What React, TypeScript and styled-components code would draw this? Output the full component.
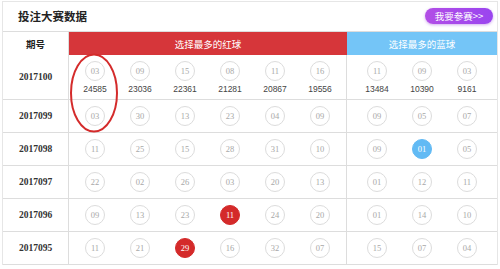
import styled, { createGlobalStyle } from "styled-components";

type Draw = {
  issue: string;
  red: string[];
  blue: string[];
  redCounts?: string[];
  blueCounts?: string[];
  hitRed?: number;
  hitBlue?: number;
};

const draws: Draw[] = [
  {
    issue: "2017100",
    red: ["03", "09", "15", "08", "11", "16"],
    blue: ["11", "09", "03"],
    redCounts: ["24585", "23036", "22361", "21281", "20867", "19556"],
    blueCounts: ["13484", "10390", "9161"],
  },
  { issue: "2017099", red: ["03", "30", "13", "23", "04", "09"], blue: ["09", "05", "07"] },
  { issue: "2017098", red: ["11", "25", "15", "28", "31", "10"], blue: ["09", "01", "05"], hitBlue: 1 },
  { issue: "2017097", red: ["22", "02", "26", "03", "20", "13"], blue: ["01", "12", "11"] },
  { issue: "2017096", red: ["09", "13", "23", "11", "24", "20"], blue: ["01", "14", "10"], hitRed: 3 },
  { issue: "2017095", red: ["11", "21", "29", "16", "32", "07"], blue: ["15", "07", "04"], hitRed: 2 },
];

const GlobalStyle = createGlobalStyle`
  body {
    margin: 0;
    background: #fff;
    font-family: "Noto Sans CJK SC", "Liberation Sans", sans-serif;
  }
`;

const App = () => {
  return (
    <Page>
      <GlobalStyle />
      <Panel>
        <TitleBar>
          <Title>投注大赛数据</Title>
          <JoinButton>我要参赛&gt;&gt;</JoinButton>
        </TitleBar>
        <HeadRow>
          <HeadLabel>期号</HeadLabel>
          <HeadBand $color="#d6363a">选择最多的红球</HeadBand>
          <HeadBand $color="#74c5f7">选择最多的蓝球</HeadBand>
        </HeadRow>
        {draws.map((d) => (
          <Row key={d.issue} $tall={!!d.redCounts}>
            <Issue>{d.issue}</Issue>
            <BallGroup $divider>
              {d.red.map((n, i) => (
                <BallCell key={i}>
                  <Ball $fill={d.hitRed === i ? "#d42a2a" : undefined}>{n}</Ball>
                  {d.redCounts && <Count>{d.redCounts[i]}</Count>}
                </BallCell>
              ))}
            </BallGroup>
            <BallGroup>
              {d.blue.map((n, i) => (
                <BallCell key={i}>
                  <Ball $fill={d.hitBlue === i ? "#62baf4" : undefined}>{n}</Ball>
                  {d.blueCounts && <Count>{d.blueCounts[i]}</Count>}
                </BallCell>
              ))}
            </BallGroup>
          </Row>
        ))}
      </Panel>
      <Circle width="50" height="82" viewBox="0 0 50 82">
        <ellipse cx="25" cy="41" rx="23" ry="38.5" fill="none" stroke="#d42b2b" strokeWidth="2" />
      </Circle>
    </Page>
  );
};

export default App;

const Page = styled.div`
  position: relative;
  width: 500px;
  height: 269px;
  overflow: hidden;
`;

const Panel = styled.div`
  box-sizing: border-box;
  width: 496px;
  margin: 1px 0 0 2px;
  border: 1px solid #e6e6e6;
  border-bottom: none;
`;

const TitleBar = styled.div`
  display: flex;
  align-items: center;
  justify-content: space-between;
  height: 29px;
  padding: 0 4px 0 15px;
  border-bottom: 1px solid #dddddd;
`;

const Title = styled.div`
  font-size: 11.5px;
  font-weight: bold;
  color: #222;
  margin-top: -1px;
`;

const JoinButton = styled.div`
  display: flex;
  align-items: center;
  justify-content: center;
  width: 68px;
  height: 16px;
  margin-top: -1px;
  border-radius: 8px;
  background: linear-gradient(90deg, #b24ee6, #9a45ef);
  box-shadow: 0 1px 3px rgba(150, 70, 220, 0.45);
  color: #fff;
  font-size: 9.5px;
`;

const HeadRow = styled.div`
  display: grid;
  grid-template-columns: 66px 278px 150px;
  height: 23px;
`;

const HeadLabel = styled.div`
  display: flex;
  align-items: center;
  justify-content: center;
  border-right: 1px solid #dddddd;
  font-size: 9.5px;
  font-weight: bold;
  color: #222;
`;

const HeadBand = styled.div<{ $color: string }>`
  display: flex;
  align-items: center;
  justify-content: center;
  background: ${({ $color }) => $color};
  color: #fff;
  font-size: 9.5px;
`;

const Row = styled.div<{ $tall: boolean }>`
  display: grid;
  grid-template-columns: 66px 278px 150px;
  height: ${({ $tall }) => ($tall ? "44px" : "32px")};
  border-bottom: 1px solid #dddddd;
`;

const Issue = styled.div`
  display: flex;
  align-items: center;
  justify-content: center;
  border-right: 1px solid #dddddd;
  font-family: "Liberation Serif", serif;
  font-size: 9.5px;
  font-weight: bold;
  color: #333;
`;

const BallGroup = styled.div<{ $divider?: boolean }>`
  display: flex;
  align-items: center;
  justify-content: center;
  border-right: ${({ $divider }) => ($divider ? "1px solid #dddddd" : "none")};
`;

const BallCell = styled.div`
  display: flex;
  flex-direction: column;
  align-items: center;
  gap: 3px;
  width: 45px;
`;

const Ball = styled.div<{ $fill?: string }>`
  box-sizing: border-box;
  display: flex;
  align-items: center;
  justify-content: center;
  width: 20px;
  height: 20px;
  border-radius: 50%;
  border: 1px solid ${({ $fill }) => $fill ?? "#dcdcdc"};
  background: ${({ $fill }) => $fill ?? "#fff"};
  color: ${({ $fill }) => ($fill ? "#fff" : "#a8a8a8")};
  font-family: "Liberation Serif", serif;
  font-size: 8.5px;
`;

const Count = styled.div`
  font-family: "Liberation Sans", sans-serif;
  font-size: 8.5px;
  line-height: 10px;
  color: #444;
`;

const Circle = styled.svg`
  position: absolute;
  left: 69px;
  top: 52px;
`;
